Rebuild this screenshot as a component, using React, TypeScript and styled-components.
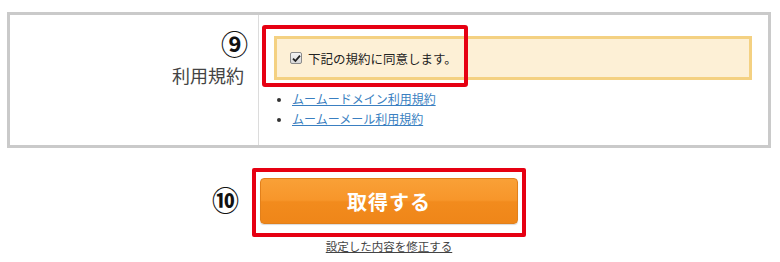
import React from 'react';
import styled, {createGlobalStyle} from "styled-components";

const GlobalStyle = createGlobalStyle`
  body {
    margin: 0;
    background: #fff;
    font-family: "Noto Sans CJK JP", "Liberation Sans", sans-serif;
    color: #333;
  }
`

function App() {
    const links = ['ムームードメイン利用規約', 'ムームーメール利用規約']

    return (
        <Page>
            <GlobalStyle />
            <Table>
                <LabelCell>
                    <Label>
                        <Marker $top={-35} $right={-4}>⑨</Marker>
                        利用規約
                    </Label>
                </LabelCell>
                <ContentCell>
                    <AgreeBox>
                        <Check>
                            <svg width="9" height="9" viewBox="0 0 9 9">
                                <path d="M1 4.6 L3.4 7 L8 1.6" fill="none" stroke="#222" strokeWidth="1.8" />
                            </svg>
                        </Check>
                        <AgreeText>下記の規約に同意します。</AgreeText>
                        <Highlight />
                    </AgreeBox>
                    <LinkList>
                        {links.map(link => (
                            <li key={link}><TermsLink href="#">{link}</TermsLink></li>
                        ))}
                    </LinkList>
                </ContentCell>
            </Table>
            <Actions>
                <ButtonFrame>
                    <Marker $top={13} $right={283}>⑩</Marker>
                    <SubmitButton>取得する</SubmitButton>
                </ButtonFrame>
                <EditLink href="#">設定した内容を修正する</EditLink>
            </Actions>
        </Page>
    );
}

const Page = styled.div`
  padding: 12px 9px 0 7px;
  width: 764px;
`

const Table = styled.div`
  display: grid;
  grid-template-columns: 249px 1fr;
  border: 3px solid #cacaca;
  height: 130px;
`

const LabelCell = styled.div`
  display: flex;
  align-items: center;
  justify-content: flex-end;
  padding: 0 14px 10px 0;
  border-right: 1px solid #dcdcdc;
`

const Label = styled.div`
  position: relative;
  font-size: 18px;
  line-height: 22px;
  color: #444;
`

const Marker = styled.span<{ $top: number, $right: number }>`
  position: absolute;
  top: ${p => p.$top}px;
  right: ${p => p.$right}px;
  font-family: "Noto Sans CJK JP", sans-serif;
  font-weight: bold;
  font-size: 27px;
  line-height: 30px;
  color: #111;
`

const ContentCell = styled.div`
  padding: 21px 16px 0 15px;
`

const AgreeBox = styled.div`
  position: relative;
  display: flex;
  align-items: center;
  height: 44px;
  box-sizing: border-box;
  padding-left: 13px;
  background: #fdf0d6;
  border: 3px solid #f4d182;
`

const Check = styled.span`
  display: inline-flex;
  align-items: center;
  justify-content: center;
  width: 10px;
  height: 10px;
  border: 1px solid #8a8a8a;
  border-radius: 2px;
  background: linear-gradient(#f4f4f4, #d8d8d8);
  margin-right: 6px;
`

const AgreeText = styled.span`
  font-size: 12.5px;
  color: #222;
`

const Highlight = styled.div`
  position: absolute;
  left: -15px;
  top: -14px;
  width: 206px;
  height: 62px;
  box-sizing: border-box;
  border: 4px solid #e60012;
  border-radius: 3px;
`

const LinkList = styled.ul`
  margin: 9px 0 0;
  padding-left: 18px;
  font-size: 12px;
  line-height: 20px;
  color: #333;

  li::marker {
    font-size: 10px;
  }
`

const TermsLink = styled.a`
  color: #3a7fc1;
  text-decoration: underline;
`

const Actions = styled.div`
  display: flex;
  flex-direction: column;
  align-items: center;
  margin-top: 20px;
`

const ButtonFrame = styled.div`
  position: relative;
  padding: 6px 4px 9px 4px;
  border: 4px solid #e60012;
  border-radius: 2px;
`

const SubmitButton = styled.button`
  display: block;
  width: 258px;
  height: 46px;
  border: 1px solid #e2801b;
  border-radius: 4px;
  background: linear-gradient(#f9a037 0%, #f7962a 48%, #f28b1d 52%, #ef8619 100%);
  color: #fff;
  font-family: "Noto Sans CJK JP", sans-serif;
  font-weight: bold;
  font-size: 20px;
  letter-spacing: 1px;
  box-shadow: 0 1px 1px rgba(0, 0, 0, 0.15);
`

const EditLink = styled.a`
  margin-top: 1px;
  font-size: 11.5px;
  color: #444;
  text-decoration: underline;
`

export default App;
